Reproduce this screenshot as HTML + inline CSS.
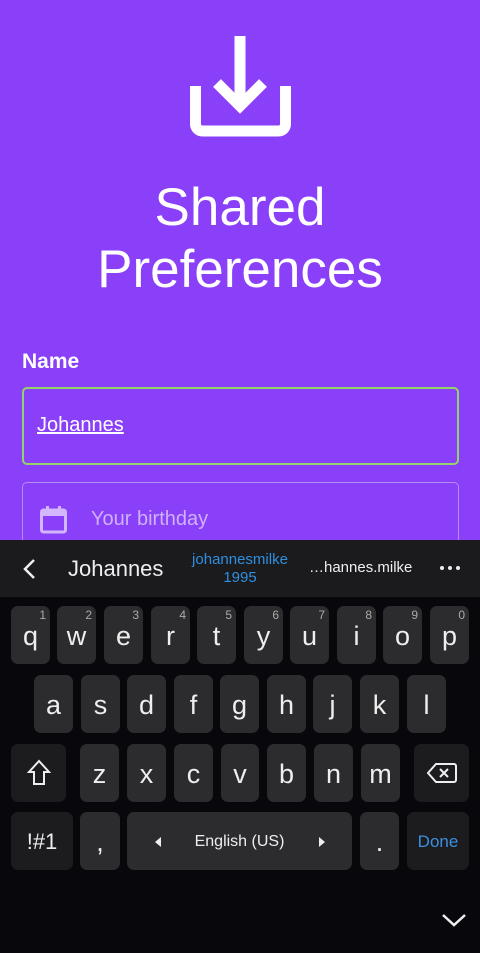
<!DOCTYPE html>
<html><head><style>
*{margin:0;padding:0;box-sizing:border-box}
body{width:480px;height:953px;overflow:hidden;background:#8a3ff8;font-family:"Liberation Sans",sans-serif;position:relative}
.t{position:absolute;left:0;width:480px;text-align:center;color:#fff;font-size:53px;line-height:62px}
.k{position:absolute;background:#2c2c2e;border-radius:7px;color:#eee;font-size:27px;text-align:center;line-height:60px;height:58px}
.k sup{position:absolute;right:4px;top:-21px;font-size:12px;color:#aaa}
.d{background:#1c1c1e}
</style></head><body>
<svg style="position:absolute;left:0;top:0" width="480" height="150">
<g fill="none" stroke="#fff" stroke-width="11">
<path d="M240 36V105"/><path d="M217 83L240 106L263 83"/>
<path d="M195.5 86V124a7 7 0 0 0 7 7h76a7 7 0 0 0 7-7V86"/>
</g></svg>
<div class="t" style="top:177px">Shared</div>
<div class="t" style="top:239px">Preferences</div>
<div style="position:absolute;left:22px;top:350px;color:#fff;font-weight:bold;font-size:21px">Name</div>
<div style="position:absolute;left:22px;top:387px;width:437px;height:78px;border:2px solid #93d46a;border-radius:5px"></div>
<div style="position:absolute;left:37px;top:414px;color:#fff;font-size:20px;text-decoration:underline">Johannes</div>
<div style="position:absolute;left:22px;top:482px;width:437px;height:80px;border:1px solid #b58df9;border-radius:5px"></div>
<svg style="position:absolute;left:40px;top:505px" width="28" height="30"><rect x="1.5" y="5" width="24" height="22" rx="2" fill="none" stroke="#d4b6fc" stroke-width="3"/><rect x="1.5" y="5" width="24" height="6" fill="#d4b6fc"/><rect x="6" y="1" width="3" height="6" fill="#d4b6fc"/><rect x="18" y="1" width="3" height="6" fill="#d4b6fc"/></svg>
<div style="position:absolute;left:91px;top:508px;color:#cfb1fb;font-size:20px">Your birthday</div>
<div style="position:absolute;left:0;top:540px;width:480px;height:57px;background:#1b1b1d"></div>
<svg style="position:absolute;left:20px;top:557px" width="18" height="24"><path d="M14 3L5 12L14 21" fill="none" stroke="#eee" stroke-width="2.5"/></svg>
<div style="position:absolute;left:68px;top:556px;color:#eee;font-size:22px">Johannes</div>
<div style="position:absolute;left:180px;top:551px;width:120px;text-align:center;color:#2f8fe0;font-size:15px;line-height:18px">johannesmilke<br>1995</div>
<div style="position:absolute;left:309px;top:559px;color:#eee;font-size:15px">…hannes.milke</div>
<div style="position:absolute;left:440px;top:566px;width:4px;height:4px;border-radius:2px;background:#eee;box-shadow:8px 0 #eee,16px 0 #eee"></div>
<div style="position:absolute;left:0;top:597px;width:480px;height:356px;background:#08070b"></div>
<div class="k" style="left:11px;top:606px;width:39px">q<sup>1</sup></div>
<div class="k" style="left:57px;top:606px;width:39px">w<sup>2</sup></div>
<div class="k" style="left:104px;top:606px;width:39px">e<sup>3</sup></div>
<div class="k" style="left:151px;top:606px;width:39px">r<sup>4</sup></div>
<div class="k" style="left:197px;top:606px;width:39px">t<sup>5</sup></div>
<div class="k" style="left:244px;top:606px;width:39px">y<sup>6</sup></div>
<div class="k" style="left:290px;top:606px;width:39px">u<sup>7</sup></div>
<div class="k" style="left:337px;top:606px;width:39px">i<sup>8</sup></div>
<div class="k" style="left:383px;top:606px;width:39px">o<sup>9</sup></div>
<div class="k" style="left:430px;top:606px;width:39px">p<sup>0</sup></div>
<div class="k" style="left:34px;top:675px;width:39px">a</div>
<div class="k" style="left:81px;top:675px;width:39px">s</div>
<div class="k" style="left:127px;top:675px;width:39px">d</div>
<div class="k" style="left:174px;top:675px;width:39px">f</div>
<div class="k" style="left:220px;top:675px;width:39px">g</div>
<div class="k" style="left:267px;top:675px;width:39px">h</div>
<div class="k" style="left:313px;top:675px;width:39px">j</div>
<div class="k" style="left:360px;top:675px;width:39px">k</div>
<div class="k" style="left:407px;top:675px;width:39px">l</div>
<div class="k d" style="left:11px;top:744px;width:55px;line-height:58px"><svg width="24" height="28" style="margin-top:15px"><path d="M12 2L2 13H7V25H17V13H22Z" fill="none" stroke="#eee" stroke-width="2"/></svg></div>
<div class="k" style="left:80px;top:744px;width:39px">z</div>
<div class="k" style="left:127px;top:744px;width:39px">x</div>
<div class="k" style="left:174px;top:744px;width:39px">c</div>
<div class="k" style="left:221px;top:744px;width:38px">v</div>
<div class="k" style="left:267px;top:744px;width:39px">b</div>
<div class="k" style="left:314px;top:744px;width:39px">n</div>
<div class="k" style="left:361px;top:744px;width:39px">m</div>
<div class="k d" style="left:414px;top:744px;width:55px;line-height:58px"><svg width="30" height="22" style="margin-top:18px"><path d="M9 2H27a2 2 0 0 1 2 2V18a2 2 0 0 1-2 2H9L1 11Z M13 7L21 15 M21 7L13 15" fill="none" stroke="#eee" stroke-width="2"/></svg></div>
<div class="k d" style="left:11px;top:812px;width:62px;font-size:22px">!#1</div>
<div class="k" style="left:80px;top:812px;width:40px">,</div>
<div class="k" style="left:127px;top:812px;width:225px;font-size:16px">English (US)</div>
<div style="position:absolute;left:155px;top:837px;border:5px solid transparent;border-right:6px solid #eee;border-left:0"></div>
<div style="position:absolute;left:319px;top:837px;border:5px solid transparent;border-left:6px solid #eee;border-right:0"></div>
<div class="k" style="left:360px;top:812px;width:39px">.</div>
<div class="k d" style="left:407px;top:812px;width:62px;font-size:17px;color:#3a8fe0">Done</div>
<svg style="position:absolute;left:441px;top:912px" width="26" height="16"><path d="M2 3L13 13L24 3" fill="none" stroke="#eee" stroke-width="2.5"/></svg>
</body></html>
